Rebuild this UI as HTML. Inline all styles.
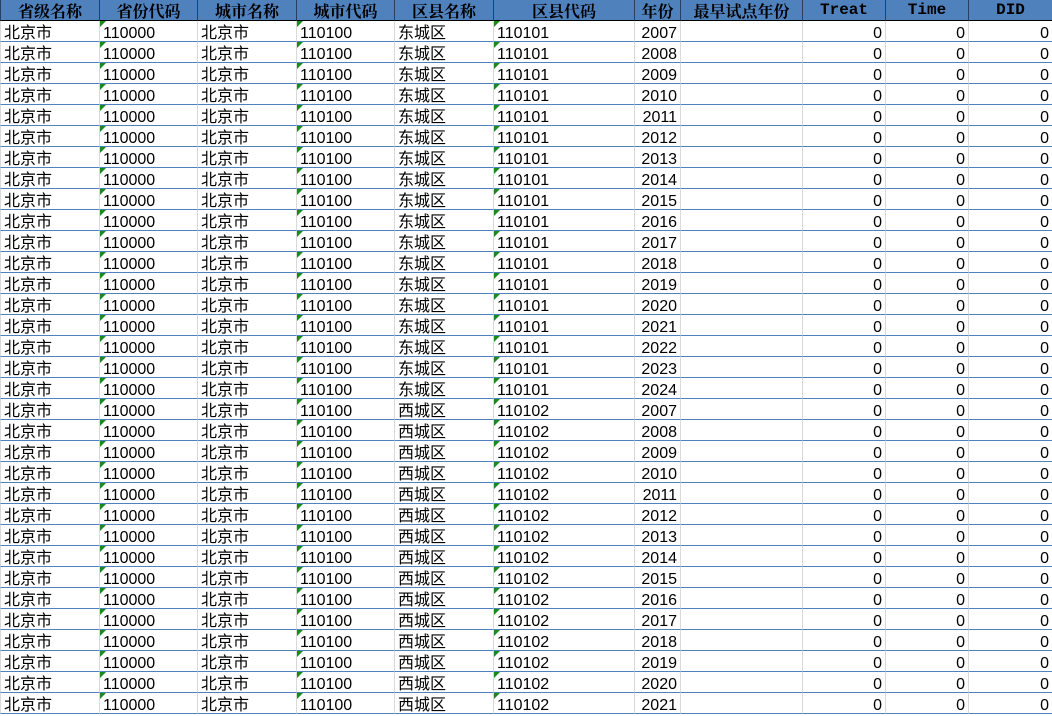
<!DOCTYPE html>
<html><head><meta charset="utf-8"><style>
body{margin:0;width:1052px;height:716px;overflow:hidden;background:#fff;font-family:"Liberation Sans","Noto Sans CJK SC",sans-serif;position:relative;}
.c{position:absolute;box-sizing:border-box;padding:0 3px;font-size:16px;white-space:nowrap;overflow:hidden;}
.h{top:0;height:21px;line-height:21px;background:#4f81bd;font-weight:bold;font-family:"Noto Serif CJK SC","Liberation Serif",serif;border-left:1px solid #2a3f5f;border-bottom:1px solid #000;text-align:center;}
.m{font-family:"Liberation Mono",monospace;}
.d{height:21px;line-height:18px;padding-top:4px;border-left:1px solid #d9d9d9;border-bottom:1px solid #4f81bd;}
.r{text-align:right;}
.t::before{content:"";position:absolute;left:0;top:0;border-top:6px solid #1a8a1a;border-right:6px solid transparent;}
</style></head><body>
<div class="c h" style="left:0;width:99px">省级名称</div>
<div class="c h" style="left:99px;width:98px">省份代码</div>
<div class="c h" style="left:197px;width:99px">城市名称</div>
<div class="c h" style="left:296px;width:98px">城市代码</div>
<div class="c h" style="left:394px;width:99px">区县名称</div>
<div class="c h" style="left:493px;width:141px">区县代码</div>
<div class="c h" style="left:634px;width:46px">年份</div>
<div class="c h" style="left:680px;width:122px">最早试点年份</div>
<div class="c h m" style="left:802px;width:83px">Treat</div>
<div class="c h m" style="left:885px;width:83px">Time</div>
<div class="c h m" style="left:968px;width:84px">DID</div>
<script>
var L=[0,99,197,296,394,493,634,680,802,885,968],W=[99,98,99,98,99,141,46,122,83,83,84];
var s="",r=0;
function row(d,c,y){var v=["北京市","110000","北京市","110100",d,c,y,"","0","0","0"],k=["","t","","t","","t","r","","r","r","r"];
var top=21+r*21;for(var i=0;i<11;i++)s+='<div class="c d '+k[i]+'" style="left:'+L[i]+'px;width:'+W[i]+'px;top:'+top+'px">'+v[i]+'</div>';r++;}
for(var y=2007;y<=2024;y++)row("东城区","110101",y);
for(var y=2007;y<=2021;y++)row("西城区","110102",y);
document.write(s);
</script>
</body></html>
